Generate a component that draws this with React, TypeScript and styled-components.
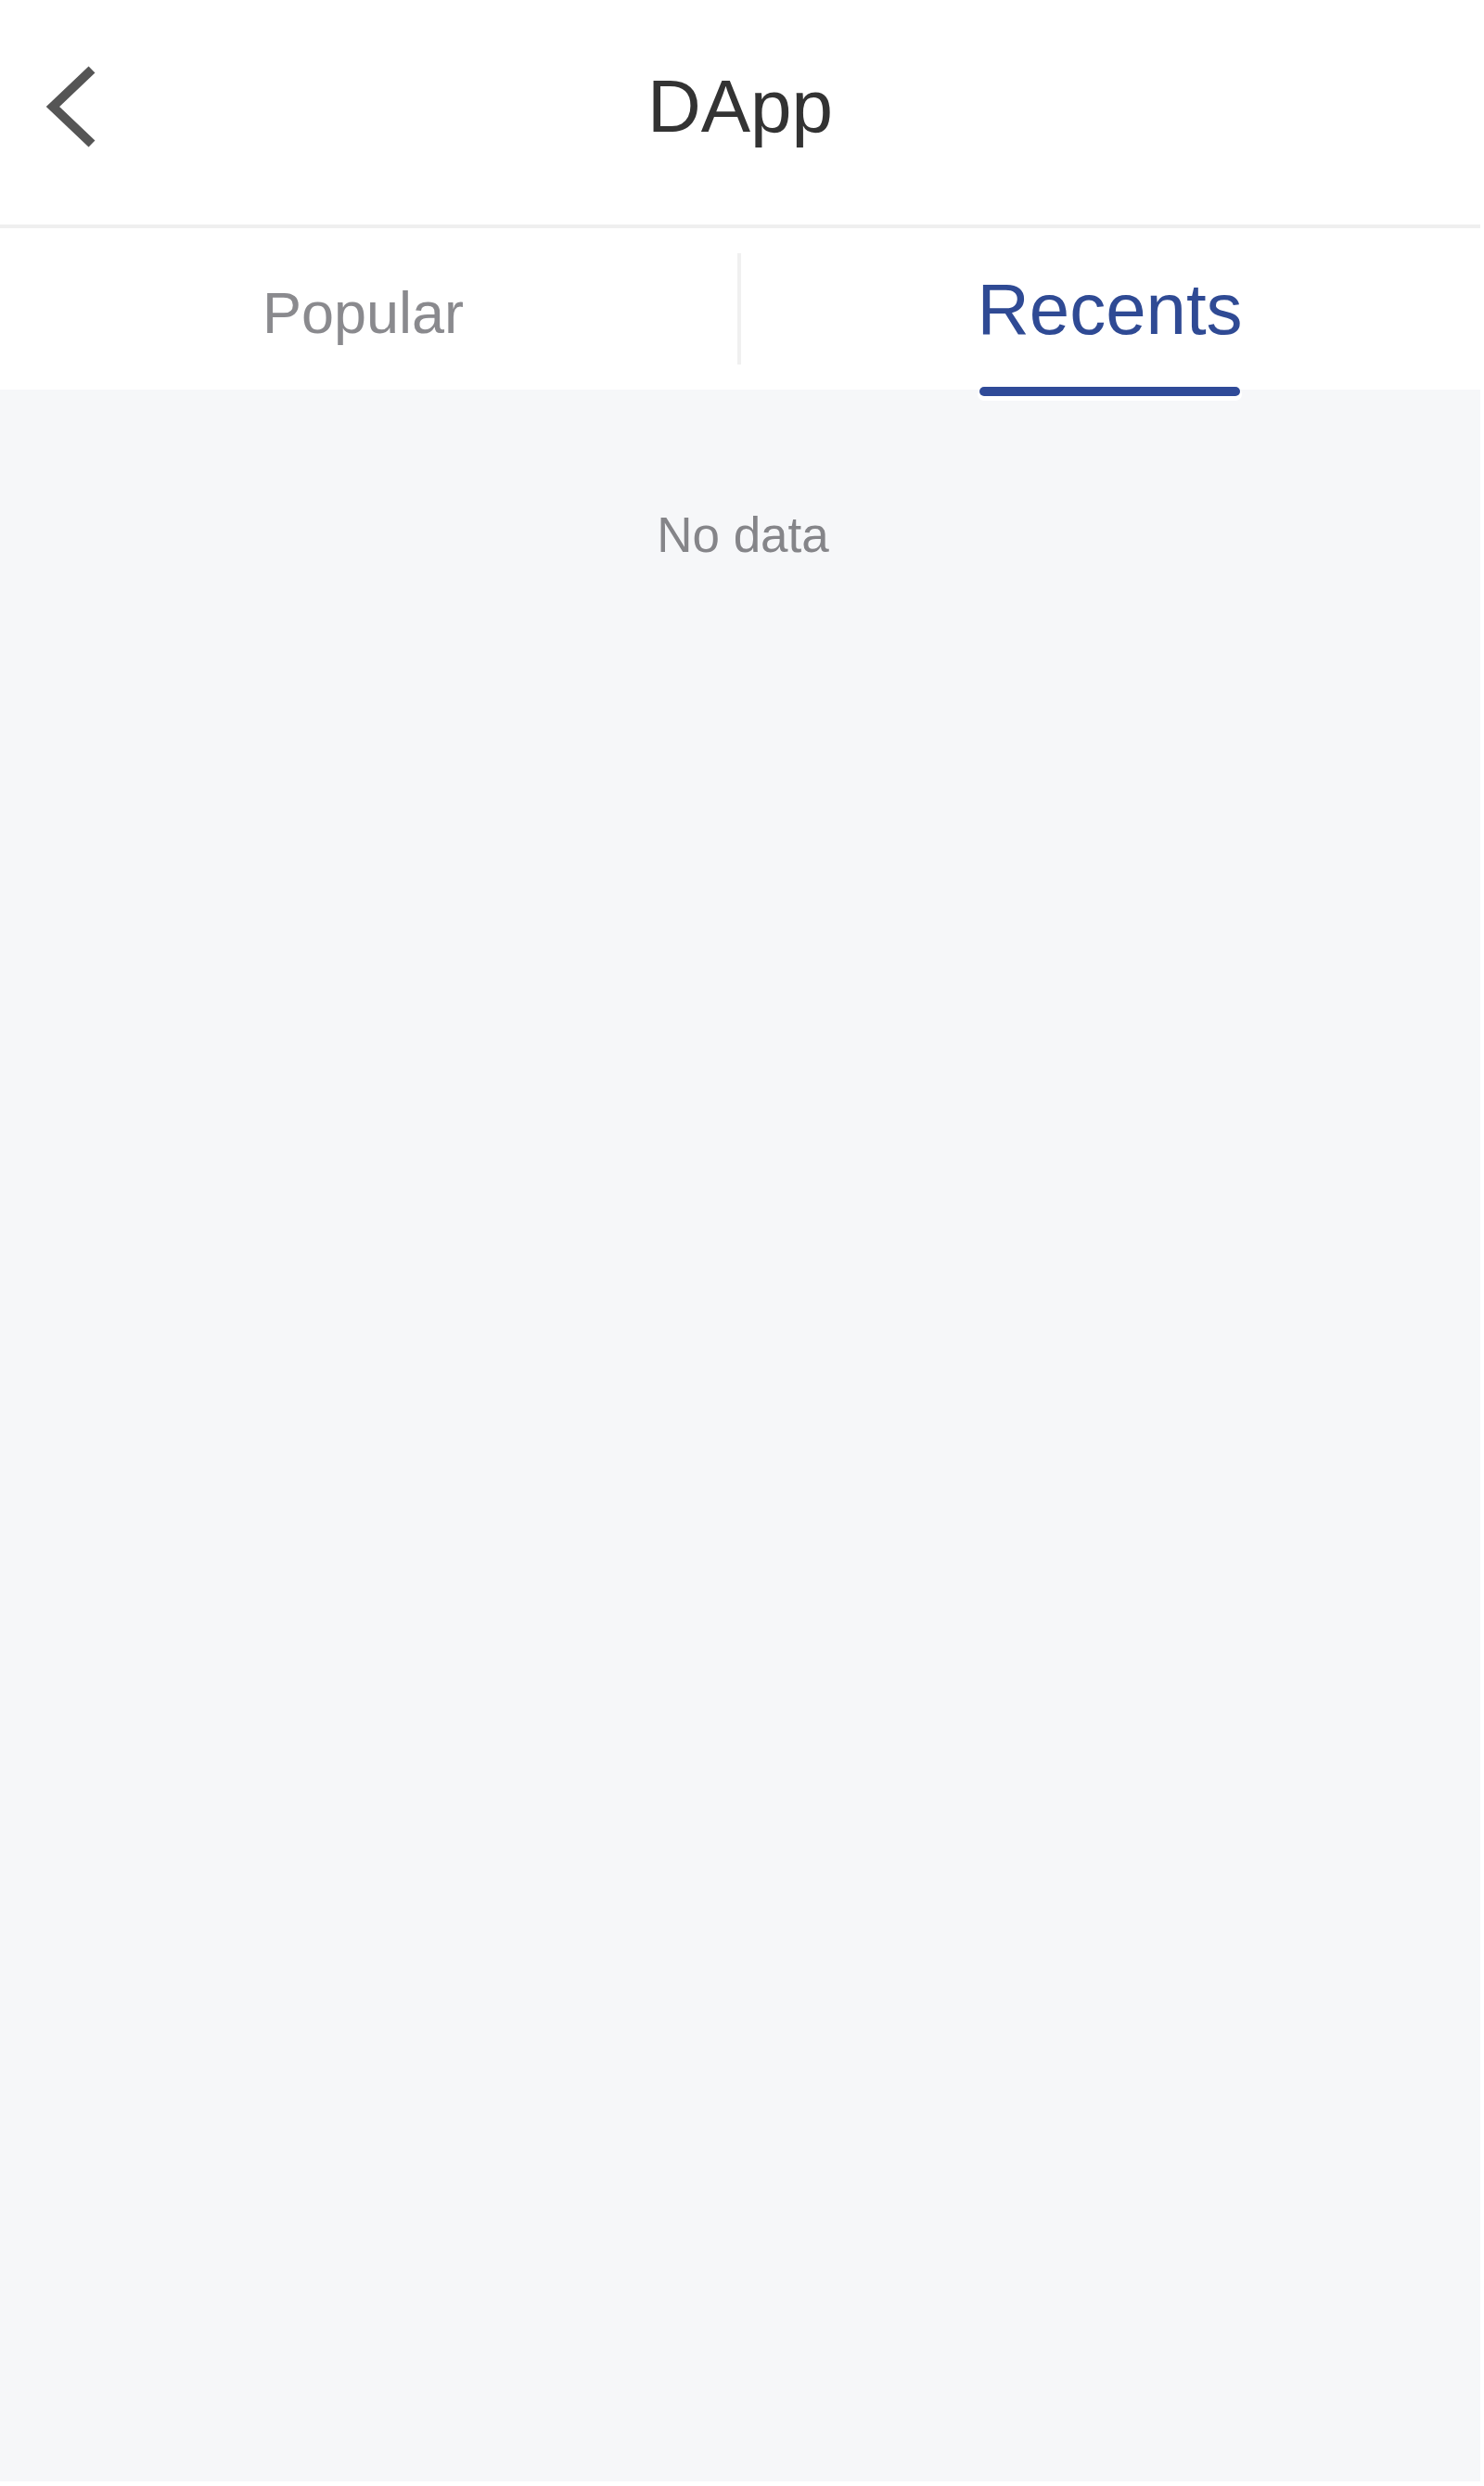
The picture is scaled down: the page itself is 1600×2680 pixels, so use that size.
import { useState } from "react";
import styled, { createGlobalStyle } from "styled-components";

const GlobalStyle = createGlobalStyle`
  html, body {
    margin: 0;
    padding: 0;
    background: #ffffff;
    font-family: "Liberation Sans", Arial, sans-serif;
  }
`;

const tabs = ["Popular", "Recents"];

const App = () => {
  const [activo, setActivo] = useState<number>(1);

  return (
    <>
      <GlobalStyle />
      <Pantalla>
        <Cabecera>
          <BotonAtras aria-label="back">
            <svg width="58" height="100" viewBox="0 0 58 100">
              <polyline
                points="51,10 9,50 51,90"
                fill="none"
                stroke="#555555"
                strokeWidth="10"
                strokeLinejoin="miter"
              />
            </svg>
          </BotonAtras>
          <Titulo>DApp</Titulo>
          <span />
        </Cabecera>

        <BarraTabs>
          {tabs.map((tab, i) => (
            <Tab key={tab} onClick={() => setActivo(i)}>
              <TabInterior>
                <EtiquetaTab $activo={activo === i}>{tab}</EtiquetaTab>
                <Subrayado $activo={activo === i} />
              </TabInterior>
            </Tab>
          ))}
          <Separador />
        </BarraTabs>

        <Contenido>
          <SinDatos>No data</SinDatos>
        </Contenido>
      </Pantalla>
    </>
  );
};

export default App;

const Pantalla = styled.div`
  width: 1596px;
  display: flex;
  flex-direction: column;
  background: #fff;
`;

const Cabecera = styled.header`
  height: 246px;
  box-sizing: border-box;
  padding-bottom: 12px;
  display: grid;
  grid-template-columns: 1fr auto 1fr;
  align-items: center;
  background: #fff;
  border-bottom: 4px solid #efefef;
`;

const BotonAtras = styled.button`
  justify-self: start;
  margin-left: 48px;
  padding: 0;
  border: none;
  background: none;
  display: flex;
  cursor: pointer;
`;

const Titulo = styled.h1`
  margin: 0;
  font-size: 80px;
  line-height: 80px;
  font-weight: 400;
  color: #333333;
`;

const BarraTabs = styled.nav`
  position: relative;
  height: 174px;
  display: grid;
  grid-template-columns: 797px 1fr;
  background: #fff;
`;

const Separador = styled.div`
  position: absolute;
  left: 795px;
  top: 27px;
  width: 4px;
  height: 120px;
  background: #f0f0f0;
`;

const Tab = styled.div`
  display: flex;
  flex-direction: column;
  align-items: center;
  justify-content: flex-end;
  cursor: pointer;
`;

const TabInterior = styled.div`
  display: inline-flex;
  flex-direction: column;
  align-items: stretch;
`;

const EtiquetaTab = styled.span<{ $activo: boolean }>`
  font-size: ${(p) => (p.$activo ? "78px" : "63px")};
  line-height: 1;
  color: ${(p) => (p.$activo ? "#2f4a94" : "#8a8a8e")};
  margin-bottom: ${(p) => (p.$activo ? "0" : "3px")};
  margin-right: ${(p) => (p.$activo ? "0" : "14px")};
  white-space: nowrap;
`;

const Subrayado = styled.div<{ $activo: boolean }>`
  position: relative;
  z-index: 1;
  height: 10px;
  margin: 45px 3px -7px;
  border-radius: 5px;
  background: ${(p) => (p.$activo ? "#2f4a98" : "transparent")};
  box-shadow: ${(p) => (p.$activo ? "0 3px 0 2px #fff" : "none")};
`;

const Contenido = styled.main`
  height: 2255px;
  background: #f6f7f9;
  display: flex;
  flex-direction: column;
  align-items: center;
  padding-top: 130px;
  box-sizing: border-box;
`;

const SinDatos = styled.p`
  margin: 0 0 0 6px;
  font-size: 53px;
  line-height: 1;
  color: #858589;
`;
